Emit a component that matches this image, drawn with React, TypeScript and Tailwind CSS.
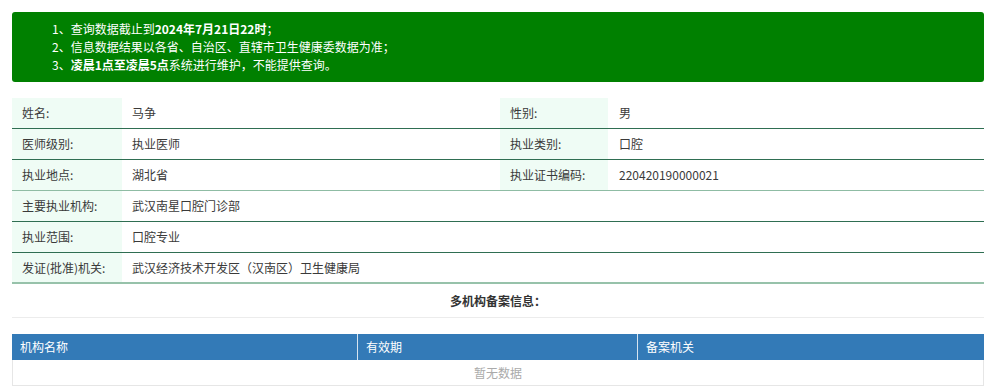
import React from 'react';

const font = { fontFamily: '"Noto Sans CJK SC", "Noto Sans", sans-serif' };

interface Row {
    label: string;
    value: string;
    label2?: string;
    value2?: string;
    border: string;
}

const rows: Row[] = [
    { label: '姓名:', value: '马争', label2: '性别:', value2: '男', border: 'border-b border-[#2f6e52]' },
    { label: '医师级别:', value: '执业医师', label2: '执业类别:', value2: '口腔', border: 'border-b border-[#2f6e52]' },
    { label: '执业地点:', value: '湖北省', label2: '执业证书编码:', value2: '220420190000021', border: 'border-b border-[#8fbca4]' },
    { label: '主要执业机构:', value: '武汉南星口腔门诊部', border: 'border-b border-[#2f6e52]' },
    { label: '执业范围:', value: '口腔专业', border: 'border-b border-[#2f6e52]' },
    { label: '发证(批准)机关:', value: '武汉经济技术开发区（汉南区）卫生健康局', border: 'border-b-2 border-[#97c2aa]' },
];

const InfoRow: React.FC<{ row: Row }> = ({ row }) => (
    <div className={`flex h-[31px] text-[12px] text-[#3a3a3a] ${row.border}`}>
        <div className="w-[110px] shrink-0 bg-[#effcf5] pl-[10px] flex items-center">{row.label}</div>
        {row.label2 ? (
            <>
                <div className="w-[378px] shrink-0 pl-[10px] flex items-center">{row.value}</div>
                <div className="w-[108px] shrink-0 bg-[#effcf5] pl-[10px] flex items-center">{row.label2}</div>
                <div className="flex-1 pl-[11px] flex items-center">{row.value2}</div>
            </>
        ) : (
            <div className="flex-1 pl-[10px] flex items-center">{row.value}</div>
        )}
    </div>
);

const App: React.FC = () => {
    return (
        <div className="w-[1000px] h-[387px] bg-white pl-3 pr-4 pt-3 overflow-hidden" style={font}>
            <div className="h-[70px] bg-[#008000] rounded-[3px] pl-10 py-2 text-white text-[12px] leading-[18px]">
                <div>
                    1、查询数据截止到<b>2024年7月21日22时</b>；
                </div>
                <div>2、信息数据结果以各省、自治区、直辖市卫生健康委数据为准；</div>
                <div>
                    3、<b>凌晨1点至凌晨5点</b>系统进行维护，不能提供查询。
                </div>
            </div>

            <div className="mt-4">
                {rows.map((row) => (
                    <InfoRow key={row.label} row={row} />
                ))}
            </div>

            <div className="h-[34px] flex items-center justify-center text-[12px] font-bold text-[#333] border-b border-[#ececec]">
                多机构备案信息：
            </div>

            <div className="mt-4">
                <div className="flex h-[26px] bg-[#337ab7] text-white text-[12px]">
                    <div className="w-[346px] pl-2 flex items-center border-r border-[#d6e4f0]">机构名称</div>
                    <div className="w-[280px] pl-2 flex items-center border-r border-[#d6e4f0]">有效期</div>
                    <div className="flex-1 pl-2 flex items-center">备案机关</div>
                </div>
                <div className="h-[26px] flex items-center justify-center text-[12px] text-[#aaa] border border-t-0 border-[#e6e6e6]">
                    暂无数据
                </div>
            </div>
        </div>
    );
};

export default App;
